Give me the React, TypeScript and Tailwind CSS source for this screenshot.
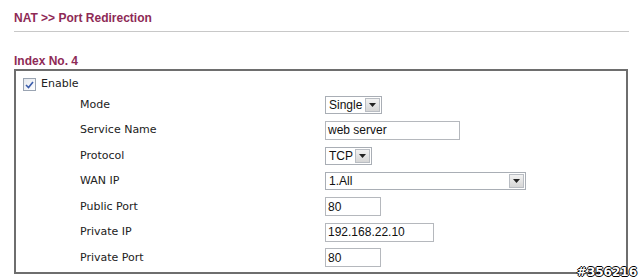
import React from 'react';

const LABEL = 'text-[11px] text-[#222] [font-family:"DejaVu_Sans",Verdana,sans-serif]';
const FIELD = 'text-[12px] text-[#111] [font-family:"Liberation_Sans",Arial,sans-serif]';
const HEAD = 'text-[12px] font-bold text-[#8e2a56] [font-family:"Liberation_Sans",Arial,sans-serif]';

function Select({ value, width }: { value: string; width: string }) {
  return (
    <div className={`${FIELD} ${width} h-[18px] flex items-center border border-[#a9aeb5] bg-white`}>
      <span className="flex-1 pl-[3px] leading-none">{value}</span>
      <span className="w-[15px] h-[14px] mr-[1px] flex items-center justify-center border border-[#b9bdc3] bg-gradient-to-b from-[#f2f2f2] to-[#d6d6d6]">
        <svg width="7" height="4" viewBox="0 0 7 4">
          <path d="M0 0h7L3.5 4z" fill="#222" />
        </svg>
      </span>
    </div>
  );
}

function Input({ value, width }: { value: string; width: string }) {
  return (
    <div className={`${FIELD} ${width} h-[19px] flex items-center pl-[2px] border border-[#b5b8bd] bg-white`}>
      {value}
    </div>
  );
}

const rows: { label: string; field: React.ReactNode }[] = [
  { label: 'Mode', field: <Select value="Single" width="w-[57px]" /> },
  { label: 'Service Name', field: <Input value="web server" width="w-[135px]" /> },
  { label: 'Protocol', field: <Select value="TCP" width="w-[47px]" /> },
  { label: 'WAN IP', field: <Select value="1.All" width="w-[201px]" /> },
  { label: 'Public Port', field: <Input value="80" width="w-[56px]" /> },
  { label: 'Private IP', field: <Input value="192.168.22.10" width="w-[109px]" /> },
  { label: 'Private Port', field: <Input value="80" width="w-[56px]" /> },
];

export default function App() {
  return (
    <main className="relative w-[640px] h-[279px] bg-white overflow-hidden">
      <div className="pl-[14px] pr-[11px]">
        <h1 className={`${HEAD} pt-[11px] h-[31px] leading-[14px]`}>NAT &gt;&gt; Port Redirection</h1>
        <div className="h-px bg-[#c8c8c8]" />
        <h2 className={`${HEAD} pt-[22px] h-[37px] leading-[14px]`}>Index No. 4</h2>
        <section className="w-[614px] border-2 border-[#6e6e6e] pb-[1px]">
          <div className="pt-[6px] h-[21px] pl-[7px] flex items-center gap-[5px]">
            <span className="w-[13px] h-[13px] border border-[#9aa4b2] bg-gradient-to-br from-[#e4e8ee] to-white flex items-center justify-center">
              <svg width="9" height="8" viewBox="0 0 9 8">
                <path d="M1 4l2.5 2.5L8 1" stroke="#3a5cab" strokeWidth="1.6" fill="none" />
              </svg>
            </span>
            <span className={LABEL}>Enable</span>
          </div>
          {rows.map((r) => (
            <div key={r.label} className="h-[25.5px] grid grid-cols-[309px_1fr] items-center">
              <span className={`${LABEL} pl-[64px]`}>{r.label}</span>
              <div>{r.field}</div>
            </div>
          ))}
        </section>
      </div>
      <span className="absolute right-[3px] bottom-[1px] text-[12px] font-bold text-white leading-none [font-family:'DejaVu_Sans',sans-serif] [text-shadow:1px_0_0_#000,-1px_0_0_#000,0_1px_0_#000,0_-1px_0_#000]">
        #356216
      </span>
    </main>
  );
}
